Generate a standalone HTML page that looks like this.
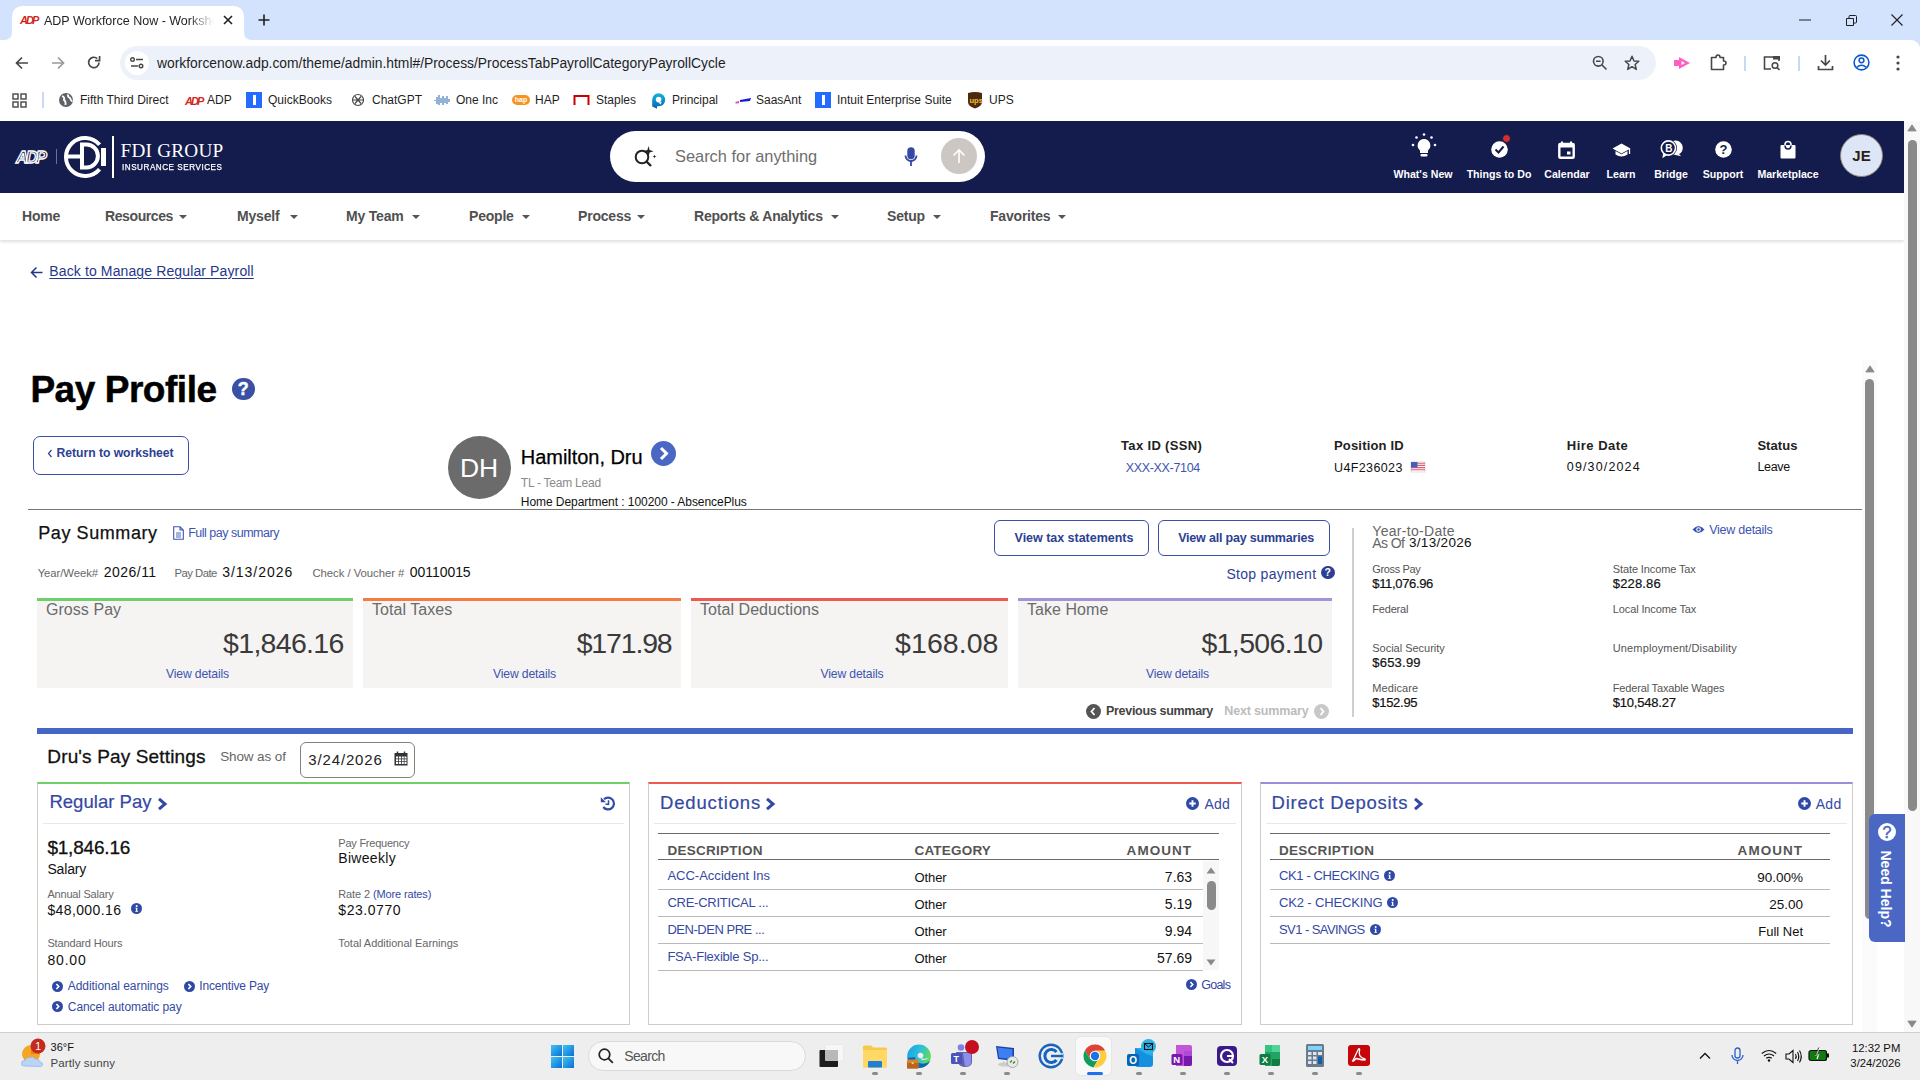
<!DOCTYPE html>
<html><head><meta charset="utf-8">
<style>
*{box-sizing:border-box;margin:0;padding:0}
html,body{width:1920px;height:1080px;overflow:hidden;background:#fff;font-family:"Liberation Sans",sans-serif;color:#000}
.a{position:absolute}
svg{display:block;overflow:visible}
.nw{white-space:nowrap}
#tabbar{left:0;top:0;width:1920px;height:50px;background:#d3e3fd}
#tab{left:12px;top:6px;width:232px;height:34px;background:#fff;border-radius:10px 10px 0 0}
#toolbar{left:0;top:40px;width:1920px;height:81px;background:#fff;border-radius:0 9px 0 0}
#url{left:120px;top:46px;width:1536px;height:34px;background:#edf2fa;border-radius:17px}
.bm{top:93px;font-size:12px;color:#1f1f1f;white-space:nowrap;line-height:14px}
#hdr{left:0;top:121px;width:1904px;height:72px;background:#141b4d}
#nav{left:0;top:193px;width:1904px;height:47px;background:#fff;box-shadow:0 2px 3px rgba(0,0,0,.13)}
.nv{top:208.2px;font-size:14px;font-weight:bold;color:#505050;white-space:nowrap;line-height:16px;letter-spacing:-0.2px}
.car{width:0;height:0;border-left:4px solid transparent;border-right:4px solid transparent;border-top:4.5px solid #555}
.hl{top:168px;color:#fff;font-size:10.6px;font-weight:bold;text-align:center;white-space:nowrap;line-height:12px}
.lnk{color:#2c46a0}
</style></head><body>
<!-- ===== CHROME ===== -->
<div id="tabbar" class="a"></div>
<div id="tab" class="a"></div>
<svg class="a" style="left:4px;top:32px" width="8" height="8"><path d="M8 0 Q8 8 0 8 L8 8Z" fill="#fff"/></svg>
<svg class="a" style="left:244px;top:32px" width="8" height="8"><path d="M0 0 Q0 8 8 8 L0 8Z" fill="#fff"/></svg>
<svg class="a" style="left:20px;top:15px" width="17" height="10" viewBox="0 0 17 10"><text x="0" y="9" font-family="Liberation Sans" font-weight="bold" font-style="italic" font-size="11" fill="#d0271d" letter-spacing="-2">ADP</text></svg>
<div class="a nw" style="left:44px;top:13.5px;font-size:12.5px;color:#1f1f1f;width:170px;overflow:hidden;-webkit-mask-image:linear-gradient(90deg,#000 85%,transparent)">ADP Workforce Now - Workshe</div>
<svg class="a" style="left:223px;top:15px" width="10" height="10"><path d="M1 1L9 9M9 1L1 9" stroke="#1f1f1f" stroke-width="1.6"/></svg>
<svg class="a" style="left:258px;top:14px" width="12" height="12"><path d="M6 0.5V11.5M0.5 6H11.5" stroke="#1f1f1f" stroke-width="1.6"/></svg>
<svg class="a" style="left:1799px;top:19px" width="12" height="2"><path d="M0 1H12" stroke="#1f1f1f" stroke-width="1"/></svg>
<svg class="a" style="left:1846px;top:15px" width="11" height="11"><path d="M0.5 3.5H7.5V10.5H0.5Z M3 3.5V1.5Q3 0.5 4 0.5H9.5Q10.5 0.5 10.5 1.5V7Q10.5 8 9.5 8H7.5" stroke="#1f1f1f" stroke-width="1" fill="none"/></svg>
<svg class="a" style="left:1891px;top:14px" width="12" height="12"><path d="M0.5 0.5L11.5 11.5M11.5 0.5L0.5 11.5" stroke="#1f1f1f" stroke-width="1.1"/></svg>

<div id="toolbar" class="a"></div>
<svg class="a" style="left:15px;top:56px" width="14" height="14"><path d="M13 7H2M7 1.5L1.5 7L7 12.5" stroke="#474747" stroke-width="1.7" fill="none"/></svg>
<svg class="a" style="left:51px;top:56px" width="14" height="14"><path d="M1 7H12M7 1.5L12.5 7L7 12.5" stroke="#9a9a9a" stroke-width="1.7" fill="none"/></svg>
<svg class="a" style="left:87px;top:55px" width="14" height="15"><path d="M12 7.5A5.2 5.2 0 1 1 10.3 3.6" stroke="#474747" stroke-width="1.7" fill="none"/><path d="M12.6 1V5.6H8" stroke="#474747" stroke-width="1.7" fill="none"/></svg>
<div id="url" class="a"></div>
<div class="a" style="left:125px;top:51px;width:24px;height:24px;border-radius:12px;background:#fff"></div>
<svg class="a" style="left:130px;top:57px" width="14" height="12"><circle cx="2.5" cy="2.5" r="1.8" stroke="#474747" stroke-width="1.4" fill="none"/><path d="M6 2.5H13" stroke="#474747" stroke-width="1.5"/><circle cx="11" cy="9" r="1.8" stroke="#474747" stroke-width="1.4" fill="none"/><path d="M1 9H8" stroke="#474747" stroke-width="1.5"/></svg>
<div class="a nw" style="left:157px;top:54.5px;font-size:13.85px;color:#1f1f1f;line-height:17px">workforcenow.adp.com/theme/admin.html#/Process/ProcessTabPayrollCategoryPayrollCycle</div>
<svg class="a" style="left:1592px;top:55px" width="16" height="16"><circle cx="6.3" cy="6.3" r="4.8" stroke="#474747" stroke-width="1.6" fill="none"/><path d="M4 6.3H8.6M9.8 9.8L14.5 14.5" stroke="#474747" stroke-width="1.6"/></svg>
<svg class="a" style="left:1624px;top:55px" width="16" height="16"><path d="M8 1.3L10 6L14.8 6.3L11.1 9.5L12.3 14.4L8 11.7L3.7 14.4L4.9 9.5L1.2 6.3L6 6Z" stroke="#474747" stroke-width="1.5" fill="none" stroke-linejoin="round"/></svg>
<svg class="a" style="left:1673px;top:55px" width="18" height="16"><path d="M1 5H6V11H1Z" fill="#ff5fbf"/><path d="M6 2L17 8L6 14Z" fill="#ff5fbf"/><path d="M8.5 6L12 8L8.5 10Z" fill="#fff"/></svg>
<svg class="a" style="left:1710px;top:54px" width="17" height="17" viewBox="0 0 17 17"><path d="M1.5 3.5H6Q6 1 8 1Q10 1 10 3.5H13.5V7Q16 7 16 9Q16 11 13.5 11V15.5H1.5Z" stroke="#474747" stroke-width="1.6" fill="none" stroke-linejoin="round"/></svg>
<div class="a" style="left:1744px;top:56px;width:2px;height:15px;background:#c9d8f5"></div>
<svg class="a" style="left:1763px;top:55px" width="19" height="17"><path d="M8 14H1.5V2H16V6" stroke="#474747" stroke-width="1.6" fill="none"/><rect x="10" y="1" width="7" height="3.5" fill="#474747"/><circle cx="12" cy="10.5" r="2.8" stroke="#474747" stroke-width="1.5" fill="none"/><path d="M14 12.5L16.5 15" stroke="#474747" stroke-width="1.6"/></svg>
<div class="a" style="left:1798px;top:56px;width:2px;height:15px;background:#c9d8f5"></div>
<svg class="a" style="left:1817px;top:54px" width="17" height="17"><path d="M8.5 1V11M4 6.5L8.5 11L13 6.5" stroke="#474747" stroke-width="1.7" fill="none"/><path d="M1.5 12V15.5H15.5V12" stroke="#474747" stroke-width="1.7" fill="none"/></svg>
<svg class="a" style="left:1853px;top:54px" width="17" height="17"><circle cx="8.5" cy="8.5" r="7.4" stroke="#0b57d0" stroke-width="1.6" fill="none"/><circle cx="8.5" cy="6.3" r="2.4" stroke="#0b57d0" stroke-width="1.5" fill="none"/><path d="M3.6 13.5Q8.5 9 13.4 13.5" stroke="#0b57d0" stroke-width="1.5" fill="none"/></svg>
<svg class="a" style="left:1896px;top:55px" width="4" height="16"><circle cx="2" cy="2" r="1.6" fill="#474747"/><circle cx="2" cy="8" r="1.6" fill="#474747"/><circle cx="2" cy="14" r="1.6" fill="#474747"/></svg>

<!-- bookmarks -->
<svg class="a" style="left:12px;top:93px" width="15" height="15"><rect x="1" y="1" width="5" height="5" stroke="#474747" stroke-width="1.4" fill="none"/><rect x="9" y="1" width="5" height="5" stroke="#474747" stroke-width="1.4" fill="none"/><rect x="1" y="9" width="5" height="5" stroke="#474747" stroke-width="1.4" fill="none"/><rect x="9" y="9" width="5" height="5" stroke="#474747" stroke-width="1.4" fill="none"/></svg>
<div class="a" style="left:42px;top:92px;width:2px;height:16px;background:#c9d8f5"></div>
<svg class="a" style="left:59px;top:93px" width="14" height="14"><circle cx="7" cy="7" r="7" fill="#5f6368"/><path d="M3 3Q6 4 5 7Q7 8 6.5 12M9 1.5Q8.5 4 11 5Q12 8 13.5 8.5" stroke="#fff" stroke-width="1.8" fill="none"/></svg>
<div class="a bm" style="left:80px">Fifth Third Direct</div>
<svg class="a" style="left:185px;top:95px" width="18" height="11" viewBox="0 0 18 11"><text x="0" y="9.5" font-family="Liberation Sans" font-weight="bold" font-style="italic" font-size="11" fill="#d0271d" letter-spacing="-2">ADP</text></svg>
<div class="a bm" style="left:207px">ADP</div>
<div class="a" style="left:246px;top:92px;width:16px;height:16px;background:#236cff"></div><div class="a" style="left:253px;top:95px;width:2.5px;height:10px;background:#fff"></div>
<div class="a bm" style="left:268px">QuickBooks</div>
<svg class="a" style="left:351px;top:93px" width="14" height="14"><g stroke="#474747" stroke-width="1.2" fill="none"><circle cx="7" cy="7" r="5.5"/><path d="M4 3.5L10 10.5M10 3.5L4 10.5M2 7H12"/></g></svg>
<div class="a bm" style="left:372px">ChatGPT</div>
<svg class="a" style="left:434px;top:93px" width="16" height="14"><g stroke="#4a7fbf" stroke-width="1.2"><path d="M1 7V8M3 4V11M5 2V12M7 5V10M9 3V12M11 5V10M13 3V11M15 6V9"/></g></svg>
<div class="a bm" style="left:456px">One Inc</div>
<div class="a" style="left:512px;top:95px;width:18px;height:10px;border-radius:5px;background:#f7931e"></div><div class="a nw" style="left:512px;top:96px;width:18px;text-align:center;font-size:7px;line-height:8px;font-weight:bold;color:#fff">hap</div>
<div class="a bm" style="left:535px">HAP</div>
<svg class="a" style="left:573px;top:94px" width="17" height="12"><path d="M1.5 11V2H15.5V11" stroke="#cc0000" stroke-width="2" fill="none"/></svg>
<div class="a bm" style="left:596px">Staples</div>
<svg class="a" style="left:651px;top:92px" width="15" height="17" viewBox="0 0 15 17"><defs><linearGradient id="pg" x1="0" y1="0" x2="0" y2="1"><stop offset="0" stop-color="#10b5dc"/><stop offset="1" stop-color="#0a62b0"/></linearGradient></defs><path d="M1.2 8A6.5 6.5 0 1 1 8 14.3L6 14.3L6 16.8L1.2 14.5Z" fill="url(#pg)"/><circle cx="7.6" cy="7.6" r="2.8" fill="#fff"/><path d="M7.6 10.4L10.8 10L9.5 12.5Z" fill="#fff"/></svg>
<div class="a bm" style="left:672px">Principal</div>
<svg class="a" style="left:735px;top:96px" width="17" height="8"><path d="M5 4L16 2L15 5L5 6Z" fill="#1a1ad6"/><path d="M0.5 6L4 5L4 7.3L0.5 7.5Z" fill="#e83cc1"/></svg>
<div class="a bm" style="left:756px">SaasAnt</div>
<div class="a" style="left:815px;top:92px;width:16px;height:16px;background:#236cff"></div><div class="a" style="left:822px;top:95px;width:2.5px;height:10px;background:#fff"></div>
<div class="a bm" style="left:837px">Intuit Enterprise Suite</div>
<svg class="a" style="left:967px;top:91px" width="16" height="18"><path d="M1 2Q8 0 15 2V11Q15 15 8 17.5Q1 15 1 11Z" fill="#4b2a0f"/><text x="2.5" y="12" font-family="Liberation Sans" font-weight="bold" font-size="7.5" fill="#fbbf2f">ups</text></svg>
<div class="a bm" style="left:989px">UPS</div>
<!-- ===== ADP HEADER ===== -->
<div id="hdr" class="a"></div>
<svg class="a" style="left:15px;top:148px" width="34" height="17" viewBox="0 0 34 17"><text x="1" y="15" font-family="Liberation Sans" font-weight="bold" font-style="italic" font-size="17" fill="none" stroke="#fff" stroke-width="1.3" letter-spacing="-2.5">ADP</text></svg>
<div class="a" style="left:56px;top:149px;width:1px;height:15px;background:#6c7196"></div>
<svg class="a" style="left:63px;top:135px" width="44" height="44" viewBox="0 0 44 44"><path d="M36.55 9.79A19 19 0 1 0 36.55 34.21" stroke="#fff" stroke-width="4" fill="none"/><path d="M19 9.6H23.5A11 11 0 0 1 23.5 32.4H19Z" stroke="#fff" stroke-width="4" fill="none"/><path d="M4.5 21.5H21" stroke="#fff" stroke-width="4"/><path d="M40.5 13V31" stroke="#fff" stroke-width="5"/></svg>
<div class="a" style="left:112px;top:136px;width:2px;height:42px;background:#fff"></div>
<div class="a nw" style="left:120.5px;top:141px;font-family:'Liberation Serif',serif;font-size:19.2px;color:#fff;line-height:20px;letter-spacing:0.25px">FDI GROUP</div>
<div class="a nw" style="left:122px;top:161.5px;font-size:9px;color:#fff;letter-spacing:0.6px;line-height:10px;transform:scaleX(0.9);transform-origin:0 0;-webkit-text-stroke:0.25px #fff">INSURANCE SERVICES</div>

<div class="a" style="left:610px;top:131px;width:375px;height:51px;border-radius:26px;background:#fff"></div>
<svg class="a" style="left:633px;top:144px" width="24" height="24" viewBox="0 0 24 24"><circle cx="9" cy="13" r="6.3" stroke="#222" stroke-width="2" fill="none"/><path d="M13.5 17.5L18 22" stroke="#222" stroke-width="2.4"/><path d="M15.5 2L16.6 6L20.5 7.2L16.6 8.4L15.5 12.4L14.4 8.4L10.5 7.2L14.4 6Z" fill="#222"/><path d="M21.5 10.5L22 12L23.5 12.5L22 13L21.5 14.5L21 13L19.5 12.5L21 12Z" fill="#222"/></svg>
<div class="a nw" style="left:675px;top:146px;font-size:16.4px;color:#6e6e6e;line-height:20px">Search for anything</div>
<svg class="a" style="left:904px;top:147px" width="14" height="20" viewBox="0 0 14 20"><rect x="4.3" y="1.3" width="5.4" height="10" rx="2.7" stroke="#3449a3" stroke-width="2" fill="#3449a3"/><path d="M1.5 8.5A5.5 5.5 0 0 0 12.5 8.5" stroke="#3449a3" stroke-width="1.8" fill="none"/><path d="M7 14V19" stroke="#3449a3" stroke-width="1.8"/></svg>
<div class="a" style="left:941px;top:138px;width:36px;height:36px;border-radius:18px;background:#ccc7c2"></div>
<svg class="a" style="left:952px;top:148px" width="14" height="16" viewBox="0 0 14 16"><path d="M7 15V2M1.5 7.5L7 2L12.5 7.5" stroke="#fff" stroke-width="1.6" fill="none"/></svg>

<!-- header icons -->
<svg class="a" style="left:1411px;top:133px" width="26" height="26" viewBox="0 0 26 26"><path d="M13 6A6.5 6.5 0 0 0 9 17.5V20H17V17.5A6.5 6.5 0 0 0 13 6Z" fill="#fff"/><rect x="9.5" y="21" width="7" height="2.5" rx="1" fill="#fff"/><circle cx="13" cy="1.5" r="1.3" fill="#fff"/><circle cx="5.5" cy="4.5" r="1.3" fill="#fff"/><circle cx="20.5" cy="4.5" r="1.3" fill="#fff"/><circle cx="2" cy="12" r="1.3" fill="#fff"/><circle cx="24" cy="12" r="1.3" fill="#fff"/></svg>
<div class="a hl" style="left:1373px;width:100px">What's New</div>
<svg class="a" style="left:1490px;top:134px" width="22" height="26" viewBox="0 0 22 26"><circle cx="9.5" cy="15.5" r="8.3" fill="#fff"/><path d="M5.5 15.5L8.5 18.5L13.5 12.5" stroke="#141b4d" stroke-width="2" fill="none"/><circle cx="16.5" cy="4.5" r="4" fill="#d32f2f" stroke="#141b4d" stroke-width="1"/></svg>
<div class="a hl" style="left:1449px;width:100px">Things to Do</div>
<svg class="a" style="left:1558px;top:141px" width="17" height="18" viewBox="0 0 17 18"><path d="M4 0.5V4M13 0.5V4" stroke="#fff" stroke-width="2"/><rect x="1.3" y="3" width="14.4" height="13.7" rx="1" stroke="#fff" stroke-width="2.4" fill="none"/><rect x="1.3" y="3" width="14.4" height="3.5" fill="#fff"/><rect x="9" y="10.5" width="3.5" height="3" fill="#fff"/></svg>
<div class="a hl" style="left:1517px;width:100px">Calendar</div>
<svg class="a" style="left:1612px;top:143px" width="19" height="15" viewBox="0 0 19 15"><path d="M9.5 0.5L0.5 5.5L9.5 10.5L18.5 5.5Z" fill="#fff"/><path d="M3.5 8V11.5Q9.5 15.5 15.5 11.5V8L9.5 11.3Z" fill="#fff"/><path d="M17.5 6V11" stroke="#fff" stroke-width="1.3"/></svg>
<div class="a hl" style="left:1571px;width:100px">Learn</div>
<svg class="a" style="left:1659px;top:138px" width="26" height="22" viewBox="0 0 26 22"><circle cx="16.6" cy="9.8" r="7.2" fill="#fff"/><path d="M19 15L22.2 18.3L15.5 16.8Z" fill="#fff"/><circle cx="9.4" cy="10" r="8.6" fill="#141b4d"/><circle cx="9.4" cy="10" r="7.1" stroke="#fff" stroke-width="1.6" fill="none"/><path d="M4.2 14.8L3.4 20.2L8.5 16.8Z" fill="#fff"/><text x="6.2" y="13.6" font-family="Liberation Sans" font-weight="bold" font-size="10" fill="#fff">B</text></svg>
<div class="a hl" style="left:1621px;width:100px">Bridge</div>
<svg class="a" style="left:1715px;top:141px" width="17" height="17" viewBox="0 0 17 17"><circle cx="8.5" cy="8.5" r="8.3" fill="#fff"/><text x="4.6" y="13.3" font-family="Liberation Sans" font-weight="bold" font-size="13" fill="#141b4d">?</text></svg>
<div class="a hl" style="left:1673px;width:100px">Support</div>
<svg class="a" style="left:1780px;top:140px" width="16" height="19" viewBox="0 0 16 19"><path d="M5 6V4.5A3 3 0 0 1 11 4.5V6" stroke="#fff" stroke-width="1.6" fill="none"/><rect x="0.5" y="5" width="15" height="13.5" rx="1" fill="#fff"/><path d="M5 5.5Q5 9 8 9Q11 9 11 5.5" stroke="#141b4d" stroke-width="1.5" fill="none"/></svg>
<div class="a hl" style="left:1738px;width:100px">Marketplace</div>
<div class="a" style="left:1840px;top:134px;width:43px;height:43px;border-radius:22px;background:#dce6f6;border:1px solid #8c8274"></div>
<div class="a nw" style="left:1840px;top:147px;width:43px;text-align:center;font-size:15px;font-weight:bold;color:#2a1f18;line-height:17px">JE</div>

<!-- ===== NAV ===== -->
<div id="nav" class="a"></div>
<div class="a nv" style="left:22px">Home</div>
<div class="a nv" style="left:105px;letter-spacing:-0.4px">Resources</div><div class="a car" style="left:179px;top:215px"></div>
<div class="a nv" style="left:237px">Myself</div><div class="a car" style="left:290px;top:215px"></div>
<div class="a nv" style="left:346px">My Team</div><div class="a car" style="left:412px;top:215px"></div>
<div class="a nv" style="left:469px">People</div><div class="a car" style="left:522px;top:215px"></div>
<div class="a nv" style="left:578px">Process</div><div class="a car" style="left:637px;top:215px"></div>
<div class="a nv" style="left:694px;letter-spacing:-0.2px">Reports &amp; Analytics</div><div class="a car" style="left:831px;top:215px"></div>
<div class="a nv" style="left:887px">Setup</div><div class="a car" style="left:933px;top:215px"></div>
<div class="a nv" style="left:990px">Favorites</div><div class="a car" style="left:1058px;top:215px"></div>
<svg class="a" style="left:30px;top:266px" width="13" height="13" viewBox="0 0 13 13"><path d="M12.5 6.5H1.5M6.5 1.5L1.5 6.5L6.5 11.5" stroke="#26378a" stroke-width="1.5" fill="none"/></svg>
<div class="a nw" style="top:263.95px;font-size:14px;line-height:14px;color:#26378a;letter-spacing:0.123px;left:49.3px;"><span style="text-decoration:underline;text-underline-offset:2px">Back to Manage Regular Payroll</span></div>
<div class="a nw" style="top:370.98px;font-size:37px;line-height:37px;color:#000;font-weight:bold;letter-spacing:-0.459px;left:30.4px;-webkit-text-stroke:0.5px #000;">Pay Profile</div>
<div class="a" style="left:232px;top:377.5px;width:22.5px;height:22.5px;border-radius:12px;background:#3a50a4"></div>
<div class="a nw" style="left:232px;top:380px;width:22.5px;text-align:center;font-size:18px;line-height:18px;font-weight:bold;color:#fff;-webkit-text-stroke:0.4px #fff">?</div>
<div class="a" style="left:33px;top:436px;width:156px;height:39px;border:1.5px solid #3a4fa8;border-radius:7px"></div>
<svg class="a" style="left:47px;top:449px" width="6" height="9" viewBox="0 0 6 9"><path d="M4.5 1L1.5 4.5L4.5 8" stroke="#2d3f94" stroke-width="1.2" fill="none"/></svg>
<div class="a nw" style="top:447.37px;font-size:12.2px;line-height:12.2px;color:#2d3f94;font-weight:bold;letter-spacing:-0.039px;left:56.5px;">Return to worksheet</div>
<div class="a" style="left:448px;top:436px;width:63px;height:63px;border-radius:32px;background:#6b6b6b"></div>
<div class="a nw" style="top:454.57px;font-size:26.5px;line-height:26.5px;color:#fff;letter-spacing:-0.141px;left:460px;">DH</div>
<div class="a nw" style="top:447.27px;font-size:20px;line-height:20px;color:#000;letter-spacing:-0.042px;left:520.8px;-webkit-text-stroke:0.25px #000;">Hamilton, Dru</div>
<div class="a" style="left:651px;top:441px;width:25px;height:25px;border-radius:13px;background:#4a67c4"></div>
<svg class="a" style="left:658px;top:446px" width="12" height="15" viewBox="0 0 12 15"><path d="M3 2L8.5 7.5L3 13" stroke="#fff" stroke-width="3" fill="none"/></svg>
<div class="a nw" style="top:476.54px;font-size:12px;line-height:12px;color:#8a8a8a;letter-spacing:-0.24px;left:520.8px;">TL - Team Lead</div>
<div class="a nw" style="top:495.64px;font-size:12px;line-height:12px;color:#111;letter-spacing:-0.057px;left:520.8px;">Home Department : 100200 - AbsencePlus</div>
<div class="a" style="left:28px;top:509px;width:1834px;height:1px;background:#777"></div>
<div class="a nw" style="top:438.70px;font-size:13px;line-height:13px;color:#222;font-weight:bold;letter-spacing:0.346px;left:1121px;">Tax ID (SSN)</div>
<div class="a nw" style="top:462.17px;font-size:12.5px;line-height:12.5px;color:#3d55b0;letter-spacing:-0.322px;left:1125.7px;">XXX-XX-7104</div>
<div class="a nw" style="top:438.70px;font-size:13px;line-height:13px;color:#222;font-weight:bold;letter-spacing:0.175px;left:1334px;">Position ID</div>
<div class="a nw" style="top:461.92px;font-size:12.5px;line-height:12.5px;color:#111;letter-spacing:0.384px;left:1334px;">U4F236023</div>
<svg class="a" style="left:1411px;top:462px" width="14" height="10" viewBox="0 0 14 10"><rect width="14" height="10" fill="#fff" stroke="#c9c9d6" stroke-width="0.6"/><path d="M0 1.2H14M0 3.4H14M0 5.6H14M0 7.8H14" stroke="#e05a6a" stroke-width="1.1"/><rect width="6.5" height="5.5" fill="#4060c0"/></svg>
<div class="a nw" style="top:438.70px;font-size:13px;line-height:13px;color:#222;font-weight:bold;letter-spacing:0.49px;left:1566.8px;">Hire Date</div>
<div class="a nw" style="top:461.42px;font-size:12.5px;line-height:12.5px;color:#111;letter-spacing:1.144px;left:1566.8px;">09/30/2024</div>
<div class="a nw" style="top:438.70px;font-size:13px;line-height:13px;color:#222;font-weight:bold;letter-spacing:0.061px;left:1757.4px;">Status</div>
<div class="a nw" style="top:461.42px;font-size:12.5px;line-height:12.5px;color:#111;letter-spacing:-0.312px;left:1757.4px;">Leave</div>
<div class="a nw" style="top:524.36px;font-size:18px;line-height:18px;color:#111;letter-spacing:0.587px;left:38.2px;-webkit-text-stroke:0.25px #111;">Pay Summary</div>
<svg class="a" style="left:173px;top:526px" width="11" height="14" viewBox="0 0 11 14"><path d="M0.7 0.7H7L10.3 4V13.3H0.7Z M7 0.7V4H10.3" stroke="#3d55b0" stroke-width="1.1" fill="none"/><path d="M3 7H8M3 9H8M3 11H8" stroke="#3d55b0" stroke-width="0.9"/></svg>
<div class="a nw" style="top:526.72px;font-size:12.5px;line-height:12.5px;color:#3d55b0;letter-spacing:-0.495px;left:188.2px;">Full pay summary</div>
<div class="a nw" style="top:567.53px;font-size:11.3px;line-height:11.3px;color:#666;letter-spacing:-0.062px;left:37.7px;">Year/Week#</div>
<div class="a nw" style="top:565.25px;font-size:14px;line-height:14px;color:#111;letter-spacing:0.465px;left:103.8px;">2026/11</div>
<div class="a nw" style="top:567.53px;font-size:11.3px;line-height:11.3px;color:#666;letter-spacing:-0.534px;left:174.6px;">Pay Date</div>
<div class="a nw" style="top:565.25px;font-size:14px;line-height:14px;color:#111;letter-spacing:0.972px;left:222.2px;">3/13/2026</div>
<div class="a nw" style="top:567.53px;font-size:11.3px;line-height:11.3px;color:#666;letter-spacing:-0.025px;left:312.4px;">Check / Voucher #</div>
<div class="a nw" style="top:565.25px;font-size:14px;line-height:14px;color:#111;letter-spacing:-0.04px;left:409.7px;">00110015</div>
<div class="a" style="left:994px;top:519.5px;width:155px;height:36px;border:1.5px solid #3a4fa8;border-radius:6px"></div>
<div class="a nw" style="top:532.02px;font-size:12.5px;line-height:12.5px;color:#2d3f94;font-weight:bold;letter-spacing:-0.029px;left:1014.6px;">View tax statements</div>
<div class="a" style="left:1158px;top:519.5px;width:172px;height:36px;border:1.5px solid #3a4fa8;border-radius:6px"></div>
<div class="a nw" style="top:532.02px;font-size:12.5px;line-height:12.5px;color:#2d3f94;font-weight:bold;letter-spacing:-0.2px;left:1178.2px;">View all pay summaries</div>
<div class="a nw" style="top:567.15px;font-size:14px;line-height:14px;color:#2d3f94;letter-spacing:0.295px;left:1226.4px;">Stop payment</div>
<div class="a" style="left:1321px;top:565.5px;width:13.5px;height:13.5px;border-radius:7px;background:#2d3f94"></div>
<div class="a nw" style="left:1321px;top:567px;width:13.5px;text-align:center;font-size:10.5px;line-height:10.5px;font-weight:bold;color:#fff">?</div>
<div class="a" style="left:37px;top:598px;width:316px;height:90px;background:#f5f4f3;border-top:3px solid #6ccf6c"></div>
<div class="a nw" style="top:602.46px;font-size:16px;line-height:16px;color:#6b6b6b;left:46px;letter-spacing:0.05px;">Gross Pay</div>
<div class="a nw" style="top:628.87px;font-size:28.5px;line-height:28.5px;color:#3a3a3a;letter-spacing:-0.706px;left:223.1px;">$1,846.16</div>
<div class="a nw" style="top:667.97px;font-size:12.2px;line-height:12.2px;color:#3d55b0;letter-spacing:-0.151px;left:166.0px;">View details</div>
<div class="a" style="left:363px;top:598px;width:318px;height:90px;background:#f5f4f3;border-top:3px solid #f47b42"></div>
<div class="a nw" style="top:602.46px;font-size:16px;line-height:16px;color:#6b6b6b;left:372px;letter-spacing:0.05px;">Total Taxes</div>
<div class="a nw" style="top:628.87px;font-size:28.5px;line-height:28.5px;color:#3a3a3a;letter-spacing:-1.169px;left:576.7px;">$171.98</div>
<div class="a nw" style="top:667.97px;font-size:12.2px;line-height:12.2px;color:#3d55b0;letter-spacing:-0.151px;left:493.0px;">View details</div>
<div class="a" style="left:691px;top:598px;width:317px;height:90px;background:#f5f4f3;border-top:3px solid #ee5a52"></div>
<div class="a nw" style="top:602.46px;font-size:16px;line-height:16px;color:#6b6b6b;left:700px;letter-spacing:0.05px;">Total Deductions</div>
<div class="a nw" style="top:628.87px;font-size:28.5px;line-height:28.5px;color:#3a3a3a;letter-spacing:0.059px;left:895.1px;">$168.08</div>
<div class="a nw" style="top:667.97px;font-size:12.2px;line-height:12.2px;color:#3d55b0;letter-spacing:-0.151px;left:820.5px;">View details</div>
<div class="a" style="left:1018px;top:598px;width:314px;height:90px;background:#f5f4f3;border-top:3px solid #a394d8"></div>
<div class="a nw" style="top:602.46px;font-size:16px;line-height:16px;color:#6b6b6b;left:1027px;letter-spacing:0.05px;">Take Home</div>
<div class="a nw" style="top:628.87px;font-size:28.5px;line-height:28.5px;color:#3a3a3a;letter-spacing:-0.628px;left:1201.4px;">$1,506.10</div>
<div class="a nw" style="top:667.97px;font-size:12.2px;line-height:12.2px;color:#3d55b0;letter-spacing:-0.151px;left:1146.0px;">View details</div>
<div class="a" style="left:1085.5px;top:703.5px;width:15px;height:15px;border-radius:8px;background:#555"></div>
<svg class="a" style="left:1089px;top:706.5px" width="8" height="9" viewBox="0 0 8 9"><path d="M5.5 1L2.5 4.5L5.5 8" stroke="#fff" stroke-width="1.8" fill="none"/></svg>
<div class="a nw" style="top:704.92px;font-size:12.5px;line-height:12.5px;color:#444;font-weight:bold;letter-spacing:-0.304px;left:1106px;">Previous summary</div>
<div class="a nw" style="top:704.92px;font-size:12.5px;line-height:12.5px;color:#bcbcbc;font-weight:bold;letter-spacing:-0.162px;left:1224.3px;">Next summary</div>
<div class="a" style="left:1314px;top:703.5px;width:15px;height:15px;border-radius:8px;background:#c8c8c8"></div>
<svg class="a" style="left:1317.5px;top:706.5px" width="8" height="9" viewBox="0 0 8 9"><path d="M2.5 1L5.5 4.5L2.5 8" stroke="#fff" stroke-width="1.8" fill="none"/></svg>
<div class="a" style="left:1352px;top:528px;width:2px;height:189px;background:#cfcfcf"></div>
<div class="a nw" style="top:523.85px;font-size:14px;line-height:14px;color:#666;letter-spacing:0.306px;left:1372.3px;">Year-to-Date</div>
<div class="a nw" style="top:535.95px;font-size:14px;line-height:14px;color:#666;letter-spacing:-0.603px;left:1372.3px;">As Of</div>
<div class="a nw" style="top:536.37px;font-size:13.5px;line-height:13.5px;color:#111;letter-spacing:0.332px;left:1408.9px;">3/13/2026</div>
<svg class="a" style="left:1692px;top:525px" width="13" height="9" viewBox="0 0 13 9"><path d="M0.5 4.5Q6.5 -2.5 12.5 4.5Q6.5 11.5 0.5 4.5Z" fill="#3d55b0"/><circle cx="6.5" cy="4.5" r="2.3" fill="#fff"/><circle cx="6.5" cy="4.5" r="1.2" fill="#3d55b0"/></svg>
<div class="a nw" style="top:523.62px;font-size:12.5px;line-height:12.5px;color:#3d55b0;letter-spacing:-0.258px;left:1709.2px;">View details</div>
<div class="a nw" style="top:564.09px;font-size:11px;line-height:11px;color:#555;letter-spacing:-0.375px;left:1372.3px;">Gross Pay</div>
<div class="a nw" style="top:577.00px;font-size:13px;line-height:13px;color:#111;letter-spacing:-0.342px;left:1372.3px;-webkit-text-stroke:0.2px #111;">$11,076.96</div>
<div class="a nw" style="top:603.99px;font-size:11px;line-height:11px;color:#555;letter-spacing:-0.188px;left:1372.3px;">Federal</div>
<div class="a nw" style="top:642.69px;font-size:11px;line-height:11px;color:#555;letter-spacing:-0.019px;left:1372.3px;">Social Security</div>
<div class="a nw" style="top:656.00px;font-size:13px;line-height:13px;color:#111;letter-spacing:0.212px;left:1372.3px;-webkit-text-stroke:0.2px #111;">$653.99</div>
<div class="a nw" style="top:682.59px;font-size:11px;line-height:11px;color:#555;letter-spacing:0.094px;left:1372.3px;">Medicare</div>
<div class="a nw" style="top:696.00px;font-size:13px;line-height:13px;color:#111;letter-spacing:-0.288px;left:1372.3px;-webkit-text-stroke:0.2px #111;">$152.95</div>
<div class="a nw" style="top:564.09px;font-size:11px;line-height:11px;color:#555;letter-spacing:-0.116px;left:1612.8px;">State Income Tax</div>
<div class="a nw" style="top:577.00px;font-size:13px;line-height:13px;color:#111;letter-spacing:0.141px;left:1612.8px;-webkit-text-stroke:0.2px #111;">$228.86</div>
<div class="a nw" style="top:603.99px;font-size:11px;line-height:11px;color:#555;letter-spacing:-0.122px;left:1612.8px;">Local Income Tax</div>
<div class="a nw" style="top:642.69px;font-size:11px;line-height:11px;color:#555;letter-spacing:0.128px;left:1612.8px;">Unemployment/Disability</div>
<div class="a nw" style="top:682.59px;font-size:11px;line-height:11px;color:#555;letter-spacing:-0.167px;left:1612.8px;">Federal Taxable Wages</div>
<div class="a nw" style="top:696.00px;font-size:13px;line-height:13px;color:#111;letter-spacing:-0.209px;left:1612.8px;-webkit-text-stroke:0.2px #111;">$10,548.27</div>
<div class="a" style="left:37px;top:728px;width:1816px;height:6px;background:#4566c2"></div>
<div class="a nw" style="top:746.62px;font-size:19px;line-height:19px;color:#111;letter-spacing:0.146px;left:47.3px;-webkit-text-stroke:0.3px #111;">Dru's Pay Settings</div>
<div class="a nw" style="top:749.57px;font-size:13.5px;line-height:13.5px;color:#666;letter-spacing:-0.121px;left:220.2px;">Show as of</div>
<div class="a" style="left:300px;top:742px;width:114.5px;height:36px;border:1px solid #8a8078;border-radius:6px"></div>
<div class="a nw" style="top:752.10px;font-size:15px;line-height:15px;color:#222;letter-spacing:0.85px;left:308.3px;">3/24/2026</div>
<svg class="a" style="left:394px;top:751px" width="14" height="15" viewBox="0 0 14 15"><path d="M3.5 0.5V3M10.5 0.5V3" stroke="#333" stroke-width="1.5"/><rect x="0.5" y="2" width="13" height="12.5" fill="#333"/><g fill="#fff"><rect x="2" y="5.5" width="2.2" height="2"/><rect x="5" y="5.5" width="2" height="2"/><rect x="7.8" y="5.5" width="2" height="2"/><rect x="10.5" y="5.5" width="2" height="2"/><rect x="2" y="8.3" width="2.2" height="2"/><rect x="5" y="8.3" width="2" height="2"/><rect x="7.8" y="8.3" width="2" height="2"/><rect x="10.5" y="8.3" width="2" height="2"/><rect x="2" y="11" width="2.2" height="2"/><rect x="5" y="11" width="2" height="2"/><rect x="7.8" y="11" width="2" height="2"/><rect x="10.5" y="11" width="2" height="2"/></g></svg>
<div class="a" style="left:37px;top:782px;width:593px;height:243px;border:1px solid #d3ccc5;border-top:2px solid #6ccf6c"></div>
<div class="a" style="left:43px;top:823px;width:581px;height:1px;background:#e8e8e8"></div>
<div class="a nw" style="top:793.34px;font-size:18.5px;line-height:18.5px;color:#3449a3;letter-spacing:0.03px;left:49.4px;-webkit-text-stroke:0.2px #3449a3;">Regular Pay</div>
<svg class="a" style="left:157px;top:797px" width="10" height="14" viewBox="0 0 10 14"><path d="M2 1.8L8 7L2 12.2" stroke="#3449a3" stroke-width="3" fill="none"/></svg>
<svg class="a" style="left:599px;top:795px" width="16" height="16" viewBox="0 0 16 16"><path d="M4.3 12A5.9 5.9 0 1 0 5 4.2" stroke="#2f49a6" stroke-width="2.2" fill="none"/><path d="M1.8 2.2V7.3H7L4.6 4.9Z" fill="#2f49a6"/><path d="M9.5 5.2V9.3H6.5" stroke="#2f49a6" stroke-width="1.5" fill="none"/></svg>
<div class="a nw" style="top:838.22px;font-size:19px;line-height:19px;color:#111;letter-spacing:-0.2px;left:47.4px;-webkit-text-stroke:0.3px #111;">$1,846.16</div>
<div class="a nw" style="top:861.75px;font-size:14px;line-height:14px;color:#111;letter-spacing:-0.162px;left:47.4px;">Salary</div>
<div class="a nw" style="top:888.79px;font-size:11px;line-height:11px;color:#666;letter-spacing:-0.187px;left:47.4px;">Annual Salary</div>
<div class="a nw" style="top:902.95px;font-size:14px;line-height:14px;color:#111;letter-spacing:0.387px;left:47.4px;">$48,000.16</div>
<svg class="a" style="left:130.9px;top:903.1px" width="11.0" height="11.0" viewBox="0 0 12 12"><circle cx="6" cy="6" r="6" fill="#2f49a6"/><circle cx="6.2" cy="3.2" r="1.1" fill="#fff"/><path d="M4.8 5.2H6.9V8.8H7.7V9.6H4.6V8.8H5.4V6H4.8Z" fill="#fff"/></svg>
<div class="a nw" style="top:938.19px;font-size:11px;line-height:11px;color:#666;letter-spacing:-0.15px;left:47.4px;">Standard Hours</div>
<div class="a nw" style="top:952.75px;font-size:14px;line-height:14px;color:#111;letter-spacing:0.837px;left:47.4px;">80.00</div>
<div class="a nw" style="top:838.39px;font-size:11px;line-height:11px;color:#666;letter-spacing:-0.233px;left:338.3px;">Pay Frequency</div>
<div class="a nw" style="top:851.45px;font-size:14px;line-height:14px;color:#111;letter-spacing:0.308px;left:338.3px;">Biweekly</div>
<div class="a nw" style="top:888.79px;font-size:11px;line-height:11px;color:#666;letter-spacing:-0.127px;left:338.3px;">Rate 2 <span style="color:#3449a3">(More rates)</span></div>
<div class="a nw" style="top:902.95px;font-size:14px;line-height:14px;color:#111;letter-spacing:0.543px;left:338.3px;">$23.0770</div>
<div class="a nw" style="top:938.19px;font-size:11px;line-height:11px;color:#666;letter-spacing:-0.022px;left:338.3px;">Total Additional Earnings</div>
<svg class="a" style="left:52.1px;top:981.4px" width="11.0" height="11.0" viewBox="0 0 12 12"><circle cx="6" cy="6" r="6" fill="#2f49a6"/><path d="M4.8 3.3L7.3 6L4.8 8.7" stroke="#fff" stroke-width="1.8" fill="none"/></svg>
<div class="a nw" style="top:980.44px;font-size:12px;line-height:12px;color:#3449a3;letter-spacing:-0.056px;left:67.8px;">Additional earnings</div>
<svg class="a" style="left:183.7px;top:981.4px" width="11.0" height="11.0" viewBox="0 0 12 12"><circle cx="6" cy="6" r="6" fill="#2f49a6"/><path d="M4.8 3.3L7.3 6L4.8 8.7" stroke="#fff" stroke-width="1.8" fill="none"/></svg>
<div class="a nw" style="top:980.44px;font-size:12px;line-height:12px;color:#3449a3;letter-spacing:-0.178px;left:199.3px;">Incentive Pay</div>
<svg class="a" style="left:52.1px;top:1001.3px" width="11.0" height="11.0" viewBox="0 0 12 12"><circle cx="6" cy="6" r="6" fill="#2f49a6"/><path d="M4.8 3.3L7.3 6L4.8 8.7" stroke="#fff" stroke-width="1.8" fill="none"/></svg>
<div class="a nw" style="top:1000.54px;font-size:12px;line-height:12px;color:#3449a3;letter-spacing:-0.079px;left:67.8px;">Cancel automatic pay</div>
<div class="a" style="left:648px;top:782px;width:594px;height:243px;border:1px solid #d3ccc5;border-top:2px solid #ee5a52"></div>
<div class="a" style="left:654px;top:823px;width:582px;height:1px;background:#e8e8e8"></div>
<div class="a nw" style="top:793.74px;font-size:18.5px;line-height:18.5px;color:#3449a3;letter-spacing:0.848px;left:660px;-webkit-text-stroke:0.2px #3449a3;">Deductions</div>
<svg class="a" style="left:765px;top:797px" width="10" height="14" viewBox="0 0 10 14"><path d="M2 1.8L8 7L2 12.2" stroke="#3449a3" stroke-width="3" fill="none"/></svg>
<svg class="a" style="left:1186.3px;top:796.5px" width="13.0" height="13.0" viewBox="0 0 12 12"><circle cx="6" cy="6" r="6" fill="#2f49a6"/><path d="M6 3V9M3 6H9" stroke="#fff" stroke-width="1.8"/></svg>
<div class="a nw" style="top:796.65px;font-size:14px;line-height:14px;color:#3449a3;letter-spacing:0.298px;left:1204.4px;">Add</div>
<div class="a" style="left:658px;top:832.5px;width:561px;height:1.5px;background:#6a6a6a"></div>
<div class="a nw" style="top:844.17px;font-size:13.5px;line-height:13.5px;color:#555;font-weight:bold;letter-spacing:0.277px;left:667.4px;">DESCRIPTION</div>
<div class="a nw" style="top:844.17px;font-size:13.5px;line-height:13.5px;color:#555;font-weight:bold;letter-spacing:0.188px;left:914.5px;">CATEGORY</div>
<div class="a nw" style="top:844.17px;font-size:13.5px;line-height:13.5px;color:#555;font-weight:bold;letter-spacing:1.042px;left:1126.6px;">AMOUNT</div>
<div class="a" style="left:658px;top:858.5px;width:561px;height:1.5px;background:#6a6a6a"></div>
<div class="a" style="left:1203px;top:861px;width:16px;height:109px;background:#f7f7f7"></div>
<svg class="a" style="left:1206px;top:867px" width="10" height="7" viewBox="0 0 10 7"><path d="M5 0.5L9.5 6.5H0.5Z" fill="#8a8a8a"/></svg>
<div class="a" style="left:1207px;top:881px;width:9px;height:29px;border-radius:4.5px;background:#8a8a8a"></div>
<svg class="a" style="left:1206px;top:959px" width="10" height="7" viewBox="0 0 10 7"><path d="M5 6.5L9.5 0.5H0.5Z" fill="#8a8a8a"/></svg>
<div class="a nw" style="top:869.40px;font-size:13px;line-height:13px;color:#3449a3;letter-spacing:0.006px;left:667.4px;">ACC-Accident Ins</div>
<div class="a nw" style="top:871.00px;font-size:13px;line-height:13px;color:#111;letter-spacing:-0.103px;left:914.5px;">Other</div>
<div class="a nw" style="top:870.15px;font-size:14px;line-height:14px;color:#111;right:727.9000000000001px;text-align:right;">7.63</div>
<div class="a" style="left:658px;top:889px;width:545px;height:1px;background:#b9b9b9"></div>
<div class="a nw" style="top:896.40px;font-size:13px;line-height:13px;color:#3449a3;letter-spacing:-0.248px;left:667.4px;">CRE-CRITICAL ...</div>
<div class="a nw" style="top:898.00px;font-size:13px;line-height:13px;color:#111;letter-spacing:-0.103px;left:914.5px;">Other</div>
<div class="a nw" style="top:897.15px;font-size:14px;line-height:14px;color:#111;right:727.9000000000001px;text-align:right;">5.19</div>
<div class="a" style="left:658px;top:916px;width:545px;height:1px;background:#b9b9b9"></div>
<div class="a nw" style="top:923.40px;font-size:13px;line-height:13px;color:#3449a3;letter-spacing:-0.468px;left:667.4px;">DEN-DEN PRE ...</div>
<div class="a nw" style="top:925.00px;font-size:13px;line-height:13px;color:#111;letter-spacing:-0.103px;left:914.5px;">Other</div>
<div class="a nw" style="top:924.15px;font-size:14px;line-height:14px;color:#111;right:727.9000000000001px;text-align:right;">9.94</div>
<div class="a" style="left:658px;top:943px;width:545px;height:1px;background:#b9b9b9"></div>
<div class="a nw" style="top:950.40px;font-size:13px;line-height:13px;color:#3449a3;letter-spacing:-0.209px;left:667.4px;">FSA-Flexible Sp...</div>
<div class="a nw" style="top:952.00px;font-size:13px;line-height:13px;color:#111;letter-spacing:-0.103px;left:914.5px;">Other</div>
<div class="a nw" style="top:951.15px;font-size:14px;line-height:14px;color:#111;right:727.9000000000001px;text-align:right;">57.69</div>
<div class="a" style="left:658px;top:970px;width:545px;height:1px;background:#b9b9b9"></div>
<svg class="a" style="left:1185.7px;top:979.2px" width="11.0" height="11.0" viewBox="0 0 12 12"><circle cx="6" cy="6" r="6" fill="#2f49a6"/><path d="M4.8 3.3L7.3 6L4.8 8.7" stroke="#fff" stroke-width="1.8" fill="none"/></svg>
<div class="a nw" style="top:978.92px;font-size:12.5px;line-height:12.5px;color:#3449a3;letter-spacing:-0.731px;left:1201.2px;">Goals</div>
<div class="a" style="left:1260px;top:782px;width:593px;height:243px;border:1px solid #d3ccc5;border-top:2px solid #9b8fdc"></div>
<div class="a" style="left:1266px;top:823px;width:581px;height:1px;background:#e8e8e8"></div>
<div class="a nw" style="top:793.74px;font-size:18.5px;line-height:18.5px;color:#3449a3;letter-spacing:0.747px;left:1271.6px;-webkit-text-stroke:0.2px #3449a3;">Direct Deposits</div>
<svg class="a" style="left:1413px;top:797px" width="10" height="14" viewBox="0 0 10 14"><path d="M2 1.8L8 7L2 12.2" stroke="#3449a3" stroke-width="3" fill="none"/></svg>
<svg class="a" style="left:1797.9px;top:796.5px" width="13.0" height="13.0" viewBox="0 0 12 12"><circle cx="6" cy="6" r="6" fill="#2f49a6"/><path d="M6 3V9M3 6H9" stroke="#fff" stroke-width="1.8"/></svg>
<div class="a nw" style="top:796.65px;font-size:14px;line-height:14px;color:#3449a3;letter-spacing:0.298px;left:1815.7px;">Add</div>
<div class="a" style="left:1270px;top:832.5px;width:560px;height:1.5px;background:#6a6a6a"></div>
<div class="a nw" style="top:844.17px;font-size:13.5px;line-height:13.5px;color:#555;font-weight:bold;letter-spacing:0.277px;left:1279px;">DESCRIPTION</div>
<div class="a nw" style="top:844.17px;font-size:13.5px;line-height:13.5px;color:#555;font-weight:bold;letter-spacing:1.042px;left:1737.6px;">AMOUNT</div>
<div class="a" style="left:1270px;top:858.5px;width:560px;height:1.5px;background:#6a6a6a"></div>
<div class="a nw" style="top:869.40px;font-size:13px;line-height:13px;color:#3449a3;letter-spacing:-0.376px;left:1279px;">CK1 - CHECKING</div>
<svg class="a" style="left:1384.0px;top:869.5px" width="11.0" height="11.0" viewBox="0 0 12 12"><circle cx="6" cy="6" r="6" fill="#2f49a6"/><circle cx="6.2" cy="3.2" r="1.1" fill="#fff"/><path d="M4.8 5.2H6.9V8.8H7.7V9.6H4.6V8.8H5.4V6H4.8Z" fill="#fff"/></svg>
<div class="a nw" style="top:870.57px;font-size:13.5px;line-height:13.5px;color:#111;right:116.90000000000009px;text-align:right;">90.00%</div>
<div class="a" style="left:1270px;top:889px;width:560px;height:1px;background:#b9b9b9"></div>
<div class="a nw" style="top:896.40px;font-size:13px;line-height:13px;color:#3449a3;letter-spacing:-0.148px;left:1279px;">CK2 - CHECKING</div>
<svg class="a" style="left:1386.5px;top:896.5px" width="11.0" height="11.0" viewBox="0 0 12 12"><circle cx="6" cy="6" r="6" fill="#2f49a6"/><circle cx="6.2" cy="3.2" r="1.1" fill="#fff"/><path d="M4.8 5.2H6.9V8.8H7.7V9.6H4.6V8.8H5.4V6H4.8Z" fill="#fff"/></svg>
<div class="a nw" style="top:897.57px;font-size:13.5px;line-height:13.5px;color:#111;right:116.90000000000009px;text-align:right;">25.00</div>
<div class="a" style="left:1270px;top:916px;width:560px;height:1px;background:#b9b9b9"></div>
<div class="a nw" style="top:923.40px;font-size:13px;line-height:13px;color:#3449a3;letter-spacing:-0.566px;left:1279px;">SV1 - SAVINGS</div>
<svg class="a" style="left:1369.5px;top:923.5px" width="11.0" height="11.0" viewBox="0 0 12 12"><circle cx="6" cy="6" r="6" fill="#2f49a6"/><circle cx="6.2" cy="3.2" r="1.1" fill="#fff"/><path d="M4.8 5.2H6.9V8.8H7.7V9.6H4.6V8.8H5.4V6H4.8Z" fill="#fff"/></svg>
<div class="a nw" style="top:925.00px;font-size:13px;line-height:13px;color:#111;right:116.90000000000009px;text-align:right;">Full Net</div>
<div class="a" style="left:1270px;top:943px;width:560px;height:1px;background:#b9b9b9"></div>
<div class="a" style="left:1862px;top:360px;width:15px;height:672px;background:#fbfbfb"></div>
<svg class="a" style="left:1865px;top:365px" width="10" height="8" viewBox="0 0 10 8"><path d="M5 0.8L9.2 7H0.8Z" fill="#8a8a8a" stroke="#8a8a8a" stroke-width="0.8" stroke-linejoin="round"/></svg>
<div class="a" style="left:1865px;top:379px;width:9px;height:540px;border-radius:4.5px;background:#8a8a8a"></div>
<div class="a" style="left:1904px;top:121px;width:16px;height:911px;background:#f8f8f8"></div>
<svg class="a" style="left:1907px;top:124px" width="10" height="8" viewBox="0 0 10 8"><path d="M5 0.8L9.2 7H0.8Z" fill="#8a8a8a" stroke="#8a8a8a" stroke-width="0.8" stroke-linejoin="round"/></svg>
<div class="a" style="left:1908px;top:140px;width:9px;height:671px;border-radius:4.5px;background:#8a8a8a"></div>
<svg class="a" style="left:1907px;top:1020px" width="10" height="8" viewBox="0 0 10 8"><path d="M5 7.2L9.2 1H0.8Z" fill="#8a8a8a" stroke="#8a8a8a" stroke-width="0.8" stroke-linejoin="round"/></svg>
<div class="a" style="left:1869px;top:814px;width:36px;height:128px;border-radius:6px 0 0 6px;background:#4a67c4"></div>
<div class="a" style="left:1878px;top:823px;width:18px;height:18px;border-radius:9px;background:#fff"></div>
<div class="a nw" style="left:1878px;top:824.5px;width:18px;text-align:center;font-size:16px;line-height:16px;color:#4a67c4;-webkit-text-stroke:0.5px #4a67c4">?</div>
<div class="a nw" style="left:1846px;top:881px;width:80px;height:16px;text-align:center;font-size:14px;line-height:16px;font-weight:bold;color:#fff;transform:rotate(90deg)">Need Help?</div>
<div class="a" style="left:0;top:1032px;width:1920px;height:48px;background:#eeeeee;border-top:1px solid #cfcfcf"></div>
<svg class="a" style="left:20px;top:1038px" width="26" height="30" viewBox="0 0 26 30"><circle cx="11" cy="16" r="9" fill="#f5a623"/><path d="M11 7A9 9 0 0 1 20 16L11 16Z" fill="#f07d1a"/><path d="M4 28Q1 28 1.5 25Q2 22 5 22.5Q6 19 10 19.5Q13 18 15.5 21Q19 20.5 20 24Q23 24.5 22.5 27Q22 28.5 20 28.5Z" fill="#b9d4f5" stroke="#94b8e8" stroke-width="0.8"/><circle cx="18" cy="8" r="7.5" fill="#c42b1c"/><text x="15.3" y="12.2" font-family="Liberation Sans" font-size="10.5" fill="#fff">1</text></svg>
<div class="a nw" style="top:1041.99px;font-size:11px;line-height:11px;color:#111;letter-spacing:0.031px;left:50.5px;">36°F</div>
<div class="a nw" style="top:1057.67px;font-size:11.5px;line-height:11.5px;color:#444;letter-spacing:0.104px;left:50.5px;">Partly sunny</div>
<svg class="a" style="left:551px;top:1045px" width="23" height="23" viewBox="0 0 23 23"><defs><linearGradient id="wg" x1="0" y1="0" x2="1" y2="1"><stop offset="0" stop-color="#3fc3f7"/><stop offset="1" stop-color="#0b6fd1"/></linearGradient></defs><rect x="0" y="0" width="11" height="11" fill="url(#wg)"/><rect x="12" y="0" width="11" height="11" fill="url(#wg)"/><rect x="0" y="12" width="11" height="11" fill="url(#wg)"/><rect x="12" y="12" width="11" height="11" fill="url(#wg)"/></svg>
<div class="a" style="left:588px;top:1041px;width:218px;height:30px;border-radius:15px;background:#f8f8f8;border:1px solid #dadada"></div>
<svg class="a" style="left:598px;top:1048px" width="16" height="16" viewBox="0 0 16 16"><circle cx="6.5" cy="6.5" r="5.3" stroke="#222" stroke-width="1.7" fill="none"/><path d="M10.3 10.3L14.8 14.8" stroke="#222" stroke-width="1.8"/></svg>
<div class="a nw" style="top:1048.85px;font-size:14px;line-height:14px;color:#555;letter-spacing:-0.674px;left:624.3px;">Search</div>
<svg class="a" style="left:819px;top:1044px" width="26" height="24" viewBox="0 0 26 24"><rect x="6" y="0.5" width="18.5" height="16.5" rx="1" fill="#f7f7f7" stroke="#e2e2e2" stroke-width="0.6"/><rect x="0.5" y="6" width="18.5" height="17" rx="1" fill="#1c1c1c"/><path d="M6 6H19V17H7Q6 17 6 16Z" fill="#b9b9b9"/></svg>
<svg class="a" style="left:863px;top:1045px" width="24" height="23" viewBox="0 0 24 23"><path d="M0 2Q0 0.5 1.5 0.5H8L10 2.5H22.5Q24 2.5 24 4V21Q24 22.5 22.5 22.5H1.5Q0 22.5 0 21Z" fill="#f7c948"/><path d="M0 5H24V21Q24 22.5 22.5 22.5H1.5Q0 22.5 0 21Z" fill="#ffd866"/><rect x="5" y="16" width="14" height="6.5" rx="1" fill="#1f7fd8"/></svg>
<svg class="a" style="left:906px;top:1044px" width="26" height="25" viewBox="0 0 26 25"><defs><linearGradient id="eg" x1="0" y1="0" x2="1" y2="0.3"><stop offset="0" stop-color="#1aa0e8"/><stop offset="0.6" stop-color="#2ec2d8"/><stop offset="1" stop-color="#5ed85a"/></linearGradient></defs><circle cx="13" cy="12.3" r="11.8" fill="url(#eg)"/><path d="M1.5 14Q3 22 12 24Q20 24.5 24.3 17Q19 21 13.5 19Q9 17 9 13Z" fill="#0e62b8"/><circle cx="14.5" cy="11.5" r="2.8" fill="#eeeeee"/><path d="M14.5 14.3Q19 15.5 23.5 13.5Q21 16 16 16Z" fill="#eeeeee"/><rect x="1" y="15.5" width="11.5" height="9" rx="1" fill="#d9822b"/><rect x="1" y="19" width="11.5" height="5.5" fill="#b5651d"/><rect x="5.7" y="18.3" width="2" height="1.8" fill="#f5d36a"/></svg>
<svg class="a" style="left:950px;top:1040px" width="30" height="29" viewBox="0 0 30 29"><circle cx="11" cy="7.5" r="3.3" fill="#7b83eb"/><path d="M6 12H20Q22 12 22 14V22Q22 27 15 27Q10 27 8 23Z" fill="#6264a7"/><path d="M13 13H21V22Q21 27 15 26Z" fill="#8b8ff0"/><rect x="1" y="13" width="11" height="11" rx="1.5" fill="#4b53bc"/><text x="3.5" y="22" font-family="Liberation Sans" font-weight="bold" font-size="9" fill="#fff">T</text><circle cx="22" cy="7" r="7" fill="#c50f1f"/></svg>
<svg class="a" style="left:995px;top:1044px" width="24" height="25" viewBox="0 0 24 25"><path d="M1 2L19 4V17L3 15Z" fill="#1f3fa8"/><path d="M2.5 3.5L17.5 5.3V15.3L4 13.8Z" fill="#3b7ff0"/><path d="M8 17Q10 21 15 20L8 19Z" fill="#aaa"/><ellipse cx="10" cy="20.5" rx="7" ry="2" fill="#ccc"/><circle cx="17.5" cy="18" r="5.5" fill="#e8e8e8" stroke="#9a9a9a" stroke-width="0.8"/><path d="M15 18.5L17 16.5M20 17.5L18 19.5" stroke="#2b8a3e" stroke-width="1.3"/></svg>
<svg class="a" style="left:1038px;top:1043px" width="26" height="26" viewBox="0 0 26 26"><circle cx="13" cy="13" r="11.3" stroke="#1565c0" stroke-width="2.4" fill="none"/><path d="M18.5 9A6.5 6.5 0 1 0 18.5 17" stroke="#1565c0" stroke-width="3" fill="none"/><path d="M13 11H25M13 15H25" stroke="#eeeeee" stroke-width="1.5"/><path d="M13 13H24" stroke="#1565c0" stroke-width="2.4"/></svg>
<div class="a" style="left:1076px;top:1037px;width:35px;height:38px;border-radius:5px;background:#f9f9f9;box-shadow:0 0 0 1px #e6e6e6"></div>
<svg class="a" style="left:1083px;top:1044px" width="24" height="24" viewBox="0 0 24 24"><path d="M12 12L12 0.5A11.5 11.5 0 0 1 22 6.3Z" fill="#db4437"/><path d="M12 0.5A11.5 11.5 0 0 0 2 6.3L7 15L12 6.5H22Z" fill="#db4437"/><path d="M2 6.3A11.5 11.5 0 0 0 10.5 23.4L15.5 15L7 15Z" fill="#0f9d58"/><path d="M22 6.5H12L15.5 15L10.5 23.4A11.5 11.5 0 0 0 22 6.5Z" fill="#ffcd40"/><circle cx="12" cy="12" r="5.3" fill="#fff"/><circle cx="12" cy="12" r="4.2" fill="#1a73e8"/></svg>
<div class="a" style="left:1087px;top:1072px;width:16px;height:3px;border-radius:1.5px;background:#1a73e8"></div>
<svg class="a" style="left:1126px;top:1039px" width="31" height="29" viewBox="0 0 31 29"><path d="M9 9H27V25Q27 28 24 28H12Q9 28 9 25Z" fill="#1490df"/><path d="M9 9L27 9L27 18Z" fill="#28a8ea"/><rect x="1" y="15" width="12" height="12" rx="2" fill="#0364b8"/><text x="3.3" y="25" font-family="Liberation Sans" font-weight="bold" font-size="10" fill="#fff">O</text><circle cx="22.5" cy="7.5" r="7.5" fill="#2cb4e8"/><rect x="18.5" y="4.5" width="8" height="6" fill="none" stroke="#111" stroke-width="1.1"/><path d="M18.5 4.5L22.5 8L26.5 4.5" stroke="#111" stroke-width="1" fill="none"/></svg>
<svg class="a" style="left:1171px;top:1044px" width="22" height="23" viewBox="0 0 22 23"><path d="M5 1H19Q21 1 21 3V20Q21 22 19 22H5Z" fill="#c255d8"/><path d="M13 12H21V20Q21 22 19 22H13Z" fill="#7719aa"/><path d="M13 7H21V12H13Z" fill="#ae4bd5"/><rect x="0.5" y="10" width="11" height="11" rx="1.5" fill="#7719aa"/><text x="2.3" y="19.2" font-family="Liberation Sans" font-weight="bold" font-size="9.5" fill="#fff">N</text></svg>
<svg class="a" style="left:1217px;top:1046px" width="20" height="20" viewBox="0 0 20 20"><rect x="0" y="0" width="20" height="20" rx="4" fill="#3a1a8a"/><circle cx="10" cy="10" r="6" fill="none" stroke="#fff" stroke-width="2.2"/><path d="M10 10H16" stroke="#fff" stroke-width="2"/><path d="M12 13L16 17" stroke="#fff" stroke-width="2"/></svg>
<svg class="a" style="left:1259px;top:1044px" width="22" height="23" viewBox="0 0 22 23"><path d="M6 1H19Q21 1 21 3V20Q21 22 19 22H6Z" fill="#21a366"/><path d="M6 1H13V8H6Z" fill="#33c481"/><path d="M13 1H19Q21 1 21 3V8H13Z" fill="#4fd494"/><path d="M13 15H21V20Q21 22 19 22H13Z" fill="#107c41"/><rect x="0.5" y="10" width="11" height="11" rx="1.5" fill="#107c41"/><text x="2.8" y="19" font-family="Liberation Sans" font-weight="bold" font-size="9.5" fill="#fff">X</text></svg>
<svg class="a" style="left:1306px;top:1044px" width="18" height="23" viewBox="0 0 18 23"><rect x="0" y="0" width="18" height="23" rx="1.5" fill="#6b7b8c"/><rect x="2" y="2" width="14" height="4" fill="#7fd3f7"/><g fill="#dfe6ee"><rect x="2" y="8" width="3.5" height="3"/><rect x="7" y="8" width="3.5" height="3"/><rect x="2" y="12.5" width="3.5" height="3"/><rect x="7" y="12.5" width="3.5" height="3"/><rect x="2" y="17" width="3.5" height="3"/><rect x="7" y="17" width="3.5" height="3"/><rect x="12" y="8" width="4" height="3"/></g><rect x="12" y="12.5" width="4" height="7.5" fill="#0f5fa8"/></svg>
<svg class="a" style="left:1348px;top:1045px" width="22" height="21" viewBox="0 0 22 21"><rect x="0" y="0" width="22" height="21" rx="3" fill="#c5070c"/><path d="M5 15.5Q8 9 10.5 4Q12 3 11.5 6Q10 11 15.5 13.5Q18 14 17 15Q14 15 8 13.5Q5 17 4.5 16Z" fill="none" stroke="#fff" stroke-width="1.3"/></svg>
<div class="a" style="left:872px;top:1072px;width:6px;height:3px;border-radius:1.5px;background:#8a8a8a"></div>
<div class="a" style="left:916px;top:1072px;width:6px;height:3px;border-radius:1.5px;background:#8a8a8a"></div>
<div class="a" style="left:960px;top:1072px;width:6px;height:3px;border-radius:1.5px;background:#8a8a8a"></div>
<div class="a" style="left:1004px;top:1072px;width:6px;height:3px;border-radius:1.5px;background:#8a8a8a"></div>
<div class="a" style="left:1136px;top:1072px;width:6px;height:3px;border-radius:1.5px;background:#8a8a8a"></div>
<div class="a" style="left:1180px;top:1072px;width:6px;height:3px;border-radius:1.5px;background:#8a8a8a"></div>
<div class="a" style="left:1224px;top:1072px;width:6px;height:3px;border-radius:1.5px;background:#8a8a8a"></div>
<div class="a" style="left:1268px;top:1072px;width:6px;height:3px;border-radius:1.5px;background:#8a8a8a"></div>
<div class="a" style="left:1312px;top:1072px;width:6px;height:3px;border-radius:1.5px;background:#8a8a8a"></div>
<div class="a" style="left:1356px;top:1072px;width:6px;height:3px;border-radius:1.5px;background:#8a8a8a"></div>
<svg class="a" style="left:1699px;top:1052px" width="12" height="7" viewBox="0 0 12 7"><path d="M1 6.5L6 1.5L11 6.5" stroke="#111" stroke-width="1.3" fill="none"/></svg>
<svg class="a" style="left:1731px;top:1047px" width="13" height="18" viewBox="0 0 13 18"><rect x="4" y="1" width="5" height="10" rx="2.5" stroke="#2a62c9" stroke-width="1.3" fill="none"/><path d="M1 8A5.5 5.5 0 0 0 12 8M6.5 13.5V17" stroke="#2a62c9" stroke-width="1.3" fill="none"/></svg>
<svg class="a" style="left:1761px;top:1049px" width="16" height="13" viewBox="0 0 16 13"><path d="M0.8 4.5Q8 -1.5 15.2 4.5M3 7Q8 3 13 7M5.3 9.3Q8 7.3 10.7 9.3" stroke="#111" stroke-width="1.2" fill="none"/><circle cx="8" cy="11.5" r="1.2" fill="#111"/></svg>
<svg class="a" style="left:1785px;top:1049px" width="17" height="15" viewBox="0 0 17 15"><path d="M1 5H4L8 1.5V13.5L4 10H1Z" stroke="#111" stroke-width="1.1" fill="none"/><path d="M10.5 5Q12 7.5 10.5 10M12.5 3Q15 7.5 12.5 12M14.5 1.5Q18 7.5 14.5 13.5" stroke="#111" stroke-width="1.1" fill="none"/></svg>
<svg class="a" style="left:1808px;top:1047px" width="22" height="15" viewBox="0 0 22 15"><rect x="1" y="3.5" width="17.5" height="10" rx="2" stroke="#111" stroke-width="1.2" fill="#107c10"/><rect x="19" y="6.5" width="2" height="4" fill="#111"/><path d="M11 1L8 8H10.5L9 12" stroke="#fff" stroke-width="1.3" fill="none"/><path d="M10.8 0.5L7.5 8H10.5" stroke="#111" stroke-width="0.8" fill="none"/></svg>
<div class="a nw" style="top:1042.73px;font-size:11.3px;line-height:11.3px;color:#111;right:19.700000000000045px;text-align:right;">12:32 PM</div>
<div class="a nw" style="top:1058.33px;font-size:11.3px;line-height:11.3px;color:#111;right:19.40000000000009px;text-align:right;">3/24/2026</div>
</body></html>
